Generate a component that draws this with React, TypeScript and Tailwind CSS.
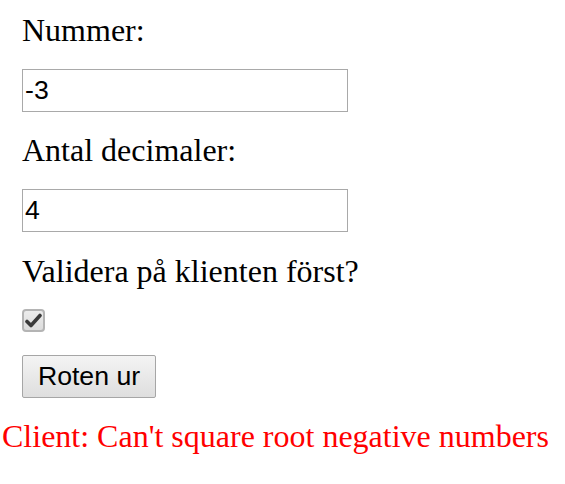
import { useState } from 'react'

const serif = { fontFamily: '"Liberation Serif", "Times New Roman", serif' }

export default function App() {
  const [num, setNum] = useState('-3')
  const [dec, setDec] = useState('4')
  const [checked, setChecked] = useState(true)

  return (
    <div className="min-h-[484px] w-[565px] bg-white text-black" style={serif}>
      <form className="flex flex-col items-start pl-[22px] pt-[12px]" onSubmit={(e) => e.preventDefault()}>
        {/* Nummer */}
        <label className="text-[32px] leading-[36px]">Nummer:</label>
        <input
          value={num}
          onChange={(e) => setNum(e.target.value)}
          className="mt-[21px] h-[43px] w-[326px] border border-[#a9a9a9] px-[2px] font-['Liberation_Sans',Arial,sans-serif] text-[26.67px] outline-none"
        />

        {/* Antal decimaler */}
        <label className="mt-[20px] text-[32px] leading-[36px]">Antal decimaler:</label>
        <input
          value={dec}
          onChange={(e) => setDec(e.target.value)}
          className="mt-[21px] h-[43px] w-[326px] border border-[#a9a9a9] px-[2px] font-['Liberation_Sans',Arial,sans-serif] text-[26.67px] outline-none"
        />

        {/* Validera */}
        <label className="mt-[20.5px] text-[32px] leading-[36px]">Validera på klienten först?</label>
        <button
          type="button"
          onClick={() => setChecked(!checked)}
          className="mt-[20px] flex h-[23px] w-[23px] items-center justify-center rounded-[4px] border-2 border-[#b4b4b4] bg-gradient-to-b from-[#ececec] to-[#dcdcdc]"
        >
          {checked && (
            <svg width="17" height="15" viewBox="0 0 17 15">
              <path d="M2 8.5 L6 12.5 L15 2.5" fill="none" stroke="#3a3a3a" strokeWidth="3.6" strokeLinecap="round" strokeLinejoin="round" />
            </svg>
          )}
        </button>

        <button
          type="submit"
          className="mt-[23px] h-[43px] w-[134px] rounded-[2px] border border-[#a6a6a6] bg-gradient-to-b from-[#f4f4f4] to-[#dedede] font-['Liberation_Sans',Arial,sans-serif] text-[26.67px] leading-none text-black"
        >
          Roten ur
        </button>
      </form>

      <p className="mt-[20px] pl-[2px] text-[32px] leading-[36px] text-[#ff0000]">
        Client: Can't square root negative numbers
      </p>
    </div>
  )
}
